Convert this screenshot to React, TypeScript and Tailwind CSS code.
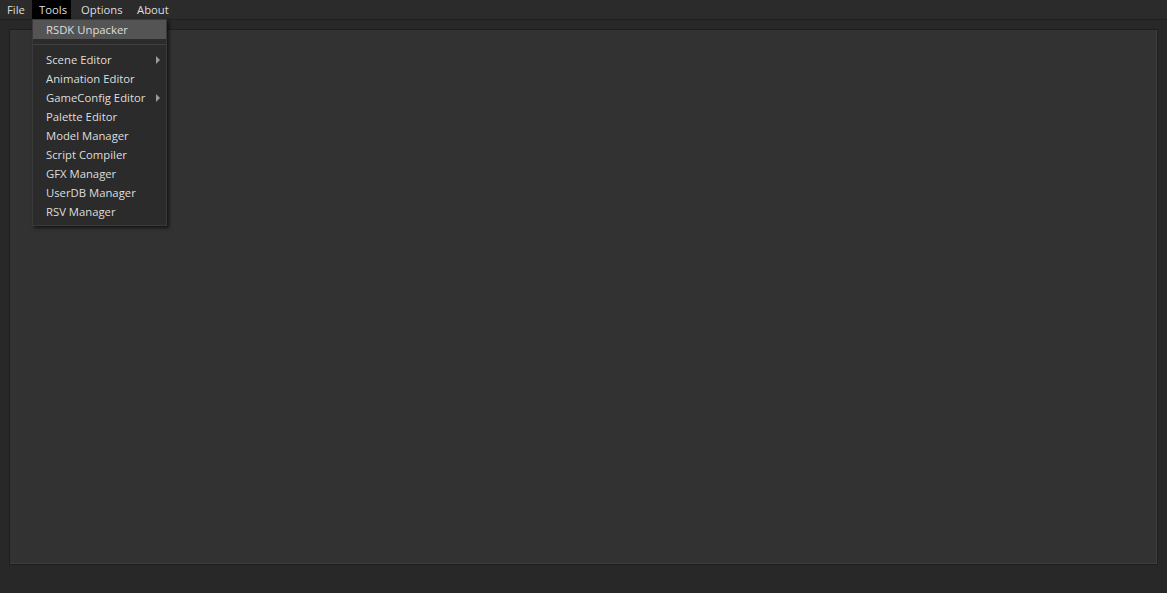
import React from "react"

const items: { label: string; sub?: boolean }[] = [
  { label: "Scene Editor", sub: true },
  { label: "Animation Editor" },
  { label: "GameConfig Editor", sub: true },
  { label: "Palette Editor" },
  { label: "Model Manager" },
  { label: "Script Compiler" },
  { label: "GFX Manager" },
  { label: "UserDB Manager" },
  { label: "RSV Manager" },
]

const App: React.FC = () => {
  return (
    <div
      className="w-[1167px] h-[593px] bg-[#282828] text-[#dedede] text-[11.3px] flex flex-col overflow-hidden"
      style={{ fontFamily: '"Open Sans", "Noto Sans", sans-serif' }}
    >
      <div className="h-[20px] bg-[#2b2b2b] border-b border-[#1f1f1f] flex items-stretch">
        <div className="w-[32px] pl-[7px] leading-[19px]">File</div>
        <div className="relative">
          <div className="w-[39px] pl-[7px] leading-[19px] bg-black">Tools</div>
          <div className="absolute left-0 top-[19px] w-[135px] bg-[#2b2b2b] border border-[#3a3a3a] shadow-[2px_2px_3px_rgba(0,0,0,0.6)] z-10 pb-[4px]">
            <div className="h-[19px] leading-[19px] pl-[13px] bg-[#545454]">RSDK Unpacker</div>
            <div className="my-[5px] border-t border-[#3f3f3f]" />
            {items.map((it) => (
              <div key={it.label} className="h-[19px] leading-[19px] pl-[13px] flex items-center justify-between pr-[6px]">
                <span>{it.label}</span>
                {it.sub && (
                  <span className="w-0 h-0 border-y-[4px] border-y-transparent border-l-[4px] border-l-[#9a9a9a]" />
                )}
              </div>
            ))}
          </div>
        </div>
        <div className="w-[56px] pl-[10px] leading-[19px]">Options</div>
        <div className="pl-[10px] leading-[19px]">About</div>
      </div>
      <div className="flex-1 pt-[9px] px-[9px] pb-[28px]">
        <div className="h-full bg-[#323232] border border-[#1e1e1e] shadow-[inset_-1px_-1px_0_#3e3e3e]" />
      </div>
    </div>
  )
}

export default App
